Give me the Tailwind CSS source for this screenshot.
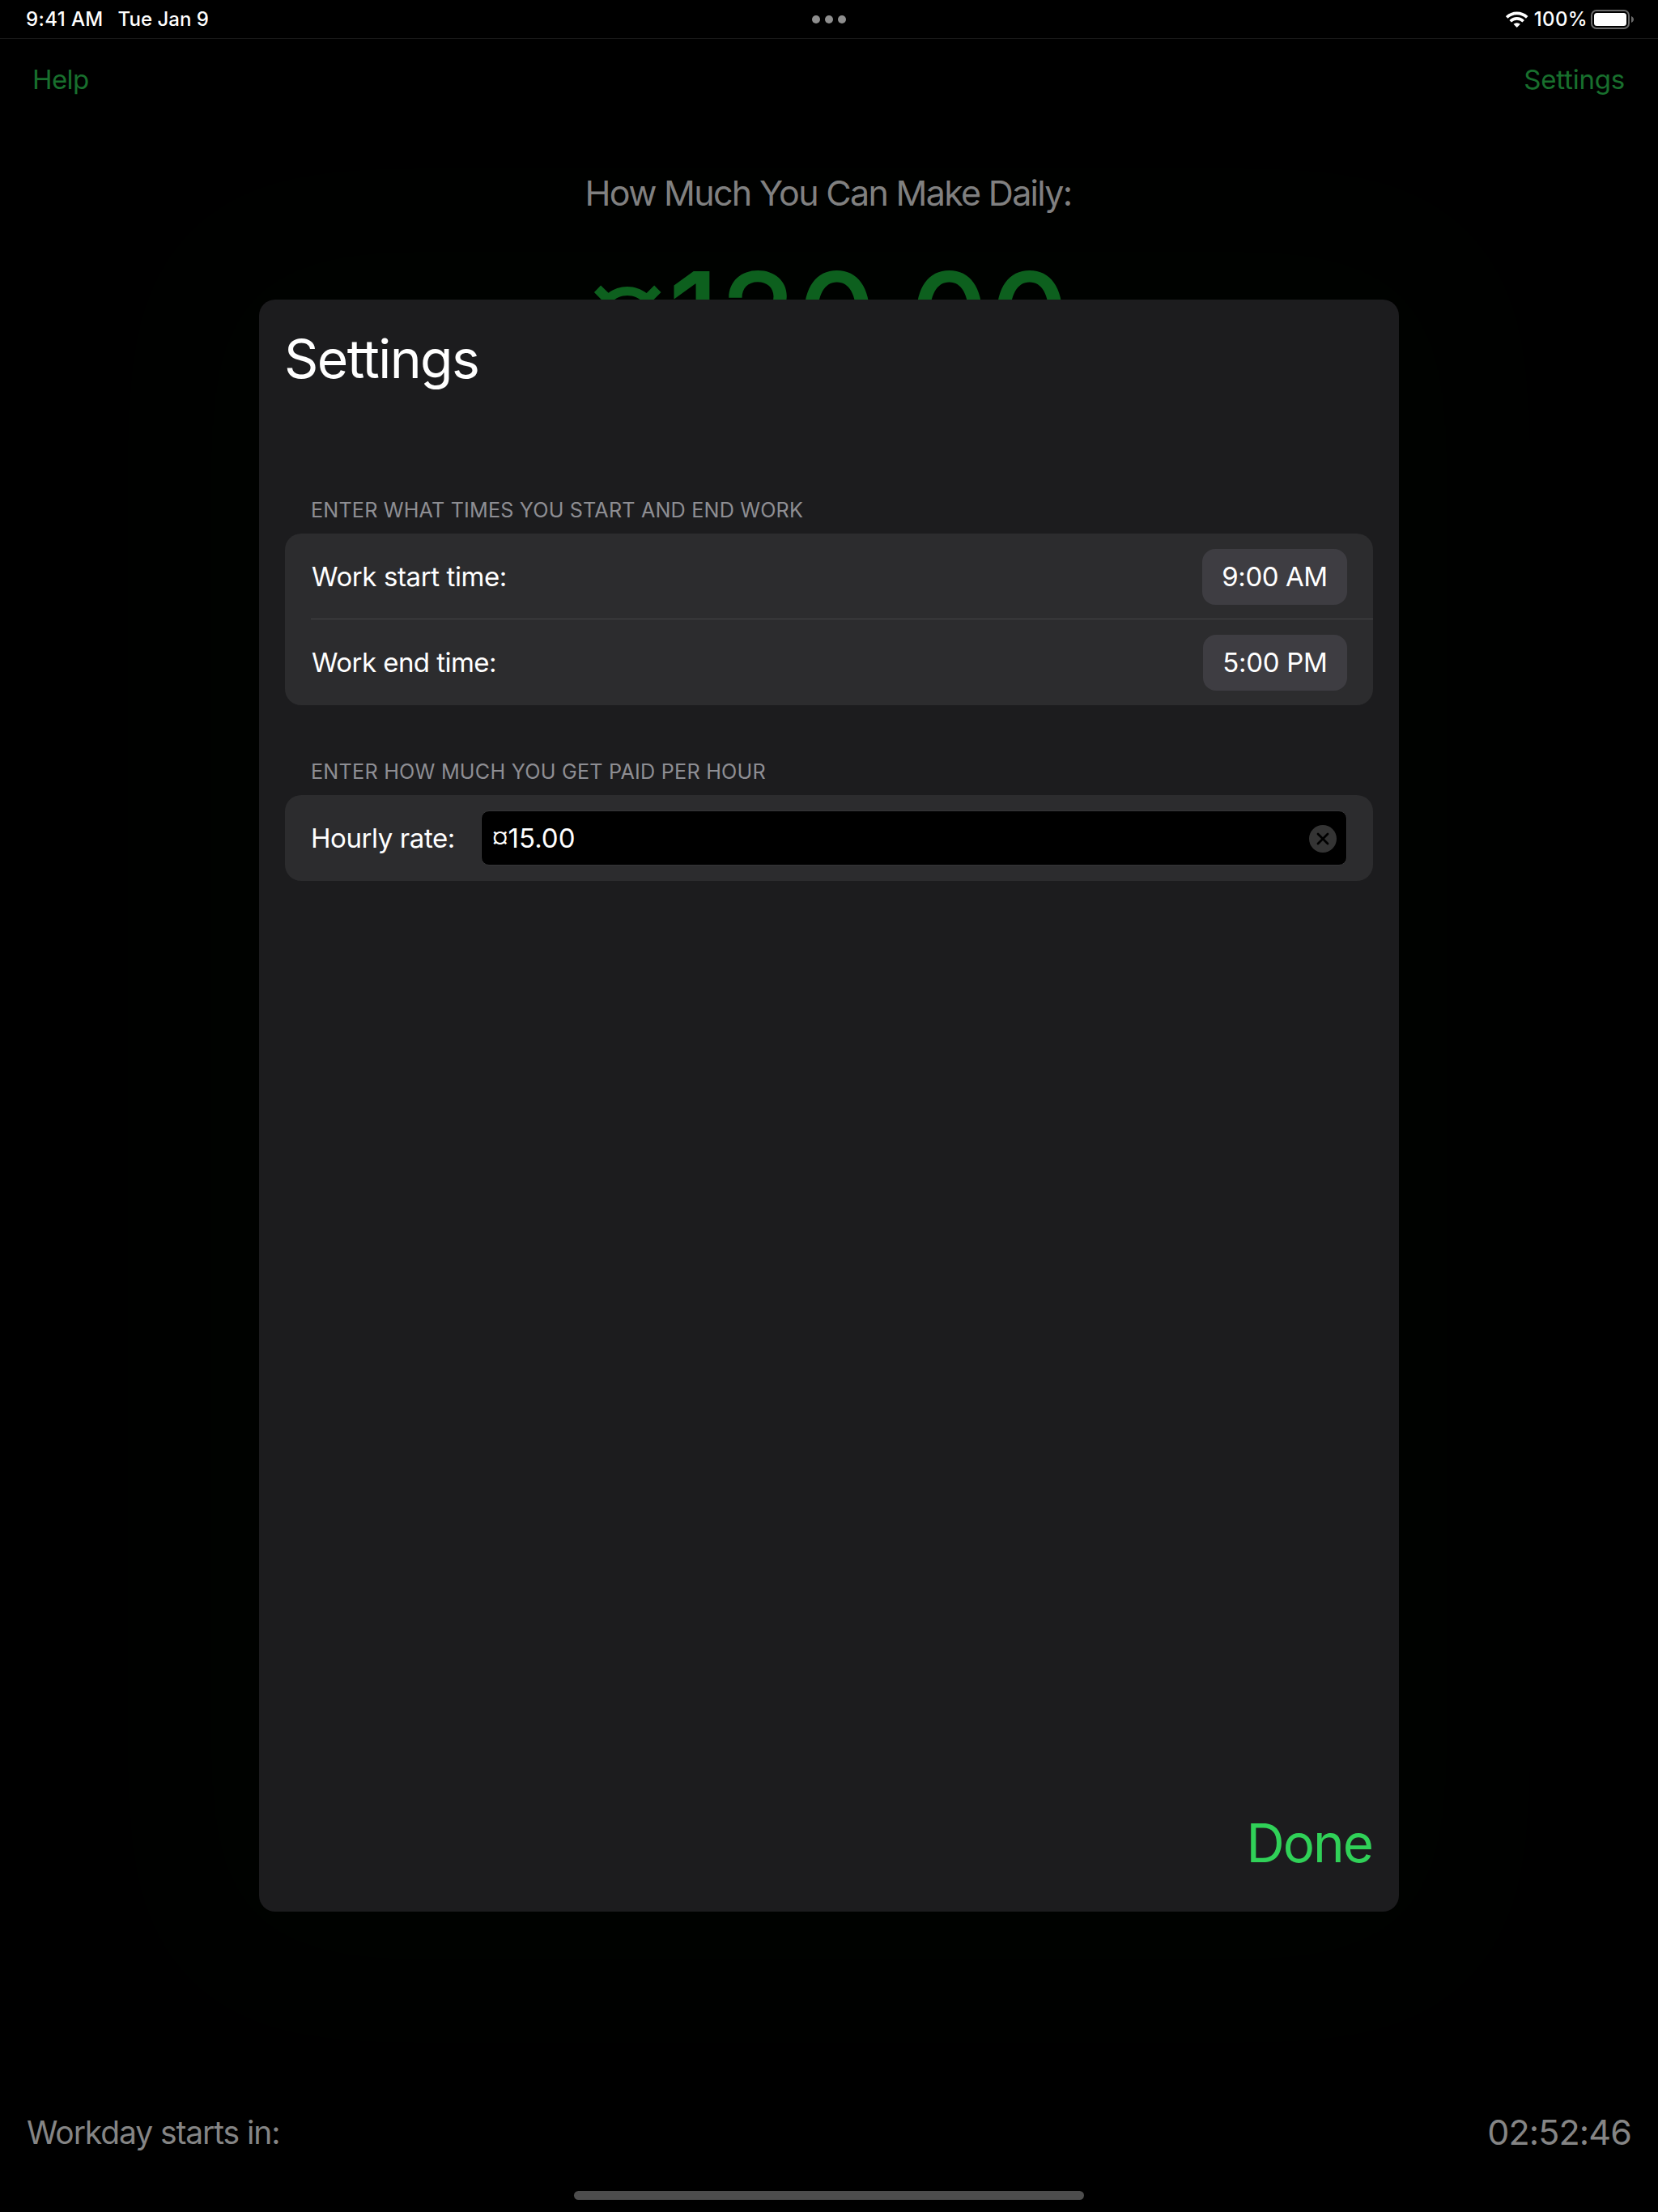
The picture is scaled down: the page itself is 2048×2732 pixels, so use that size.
<!DOCTYPE html>
<html lang="en">
<head>
<meta charset="utf-8">
<title>Settings</title>
<script src="https://cdn.jsdelivr.net/npm/@tailwindcss/browser@4"></script>
</head>
<body class="bg-black font-['Inter',sans-serif]">
<div class="relative isolate flex h-[2732px] w-[2048px] flex-col overflow-hidden bg-black">
  <!-- faint green glow behind the sheet -->
  <div class="absolute top-[370px] left-[320px] -z-10 h-[1991px] w-[1408px] rounded-[20px] bg-[#000300] shadow-[0_0_240px_110px_#000300]"></div>
  <header class="flex h-12 shrink-0 items-center justify-between border-b border-[#191919] px-[29px] text-[24px] font-medium text-white">
    <div class="flex w-[400px] gap-[18px] pl-[3px] whitespace-nowrap"><span class="tracking-[0.4px]">9:41 AM</span><span>Tue Jan 9</span></div>
    <div class="flex gap-1.5"><i class="size-2.5 rounded-full bg-[#8e8e8e]"></i><i class="size-2.5 rounded-full bg-[#8e8e8e]"></i><i class="size-2.5 rounded-full bg-[#8e8e8e]"></i></div>
    <div class="flex w-[400px] items-center justify-end">
      <svg class="mr-[7px] h-5 w-7" viewBox="0 0 28 20" fill="none" stroke="#fff" stroke-width="3.6"><path d="M1.200 7.400a18 18 0 0 1 25 0M5.700 12.200a11.400 11.400 0 0 1 16 0"/><path d="M13.700 20l-4.200-4.200a6.200 6.200 0 0 1 8.400 0z" fill="#fff" stroke="none"/></svg>
      <span class="tracking-[0.35px]">100%</span>
      <svg class="ml-1 h-6 w-[54px]" viewBox="0 0 54 24"><rect x="1" y="1" width="46" height="22" rx="6" fill="none" stroke="#6a6a6a" stroke-width="2"/><rect x="4" y="4" width="40" height="16" rx="3.5" fill="#fff"/><path d="M50 8c4 1.500 4 6.500 0 8z" fill="#6a6a6a"/></svg>
    </div>
  </header>
  <nav class="mt-[30px] flex h-10 shrink-0 items-center justify-between pr-[41px] pl-10 text-[33px] leading-10 text-[#186f2d]">
    <span class="tracking-[-0.59px]">Help</span><span class="tracking-[-0.2px]">Settings</span>
  </nav>
  <main class="flex grow flex-col items-center">
    <h1 class="mt-[90px] -ml-[2px] text-[43px] leading-[60px] tracking-[-1.7px] text-[#808080]">How Much You Can Make Daily:</h1>
    <p class="mt-[23px] flex gap-px text-[152px] leading-[200px] font-medium text-[#0d601e]"><span class="-mt-[5px] text-[134px]">¤</span><span class="tracking-[1.3px]">120.00</span></p>
  </main>
  <footer class="flex h-[99px] shrink-0 items-start justify-between pr-[33px] pl-[33px] text-[#858585]">
    <span class="text-[39px] leading-[2px] tracking-[-1.1px]">Workday starts in:</span><span class="text-[43px] leading-[1px] tracking-[-0.9px]">02:52:46</span>
  </footer>

  <section class="absolute top-[370px] left-[320px] flex h-[1991px] w-[1408px] flex-col rounded-[20px] bg-[#1c1c1e] px-8 text-[33px] text-white">
    <h2 class="-ml-px mt-[33px] text-[66px] leading-[80px] tracking-[-1.55px]">Settings</h2>
    <h3 class="mt-[132px] pl-8 text-[25.2px] leading-[30px] tracking-[0.16px] text-[#8e8e93]">ENTER WHAT TIMES YOU START AND END WORK</h3>
    <div class="mt-[14px] rounded-[20px] bg-[#2c2c2e] pl-8">
      <div class="flex h-[106px] items-center justify-between border-b border-[#444446] pt-[2px] pr-8"><span class="pl-px tracking-[-0.4px]">Work start time:</span><span class="flex h-[69px] w-[179px] items-center justify-center rounded-2xl bg-[#3e3d42] tracking-[-0.44px]">9:00 AM</span></div>
      <div class="flex h-[106px] items-center justify-between pt-px pr-8"><span class="pl-px tracking-[-0.55px]">Work end time:</span><span class="flex h-[69px] w-[178px] items-center justify-center rounded-2xl bg-[#3e3d42] tracking-[-0.3px]">5:00 PM</span></div>
    </div>
    <h3 class="mt-[67px] pl-8 text-[25.2px] leading-[30px] tracking-[0.22px] text-[#8e8e93]">ENTER HOW MUCH YOU GET PAID PER HOUR</h3>
    <div class="mt-[14px] flex h-[106px] items-center rounded-[20px] bg-[#2c2c2e] px-8">
      <span class="w-[210px] pt-[2px] tracking-[-0.42px]">Hourly rate:</span>
      <div class="flex h-[68px] grow items-center justify-between rounded-[10px] border border-[#363638] bg-black pt-[2px] pr-3 pl-[13px]"><span class="flex items-center"><span class="pb-1 text-[27px]">¤</span><span>15.00</span></span>
        <svg class="size-[34px]" viewBox="0 0 34 34"><circle cx="17" cy="17" r="17" fill="#343434"/><path d="M11 11l12 12M23 11l-12 12" stroke="#000" stroke-width="2.800" stroke-linecap="round"/></svg></div>
    </div>
    <div class="mt-auto mr-px mb-[44px] self-end text-[65.500px] leading-[80px] tracking-[-2px] text-[#30d158]">Done</div>
  </section>
  <div class="absolute bottom-[15px] left-1/2 h-[11px] w-[630px] -translate-x-1/2 rounded-full bg-[#4d4d4d]"></div>
</div>
</body>
</html>
